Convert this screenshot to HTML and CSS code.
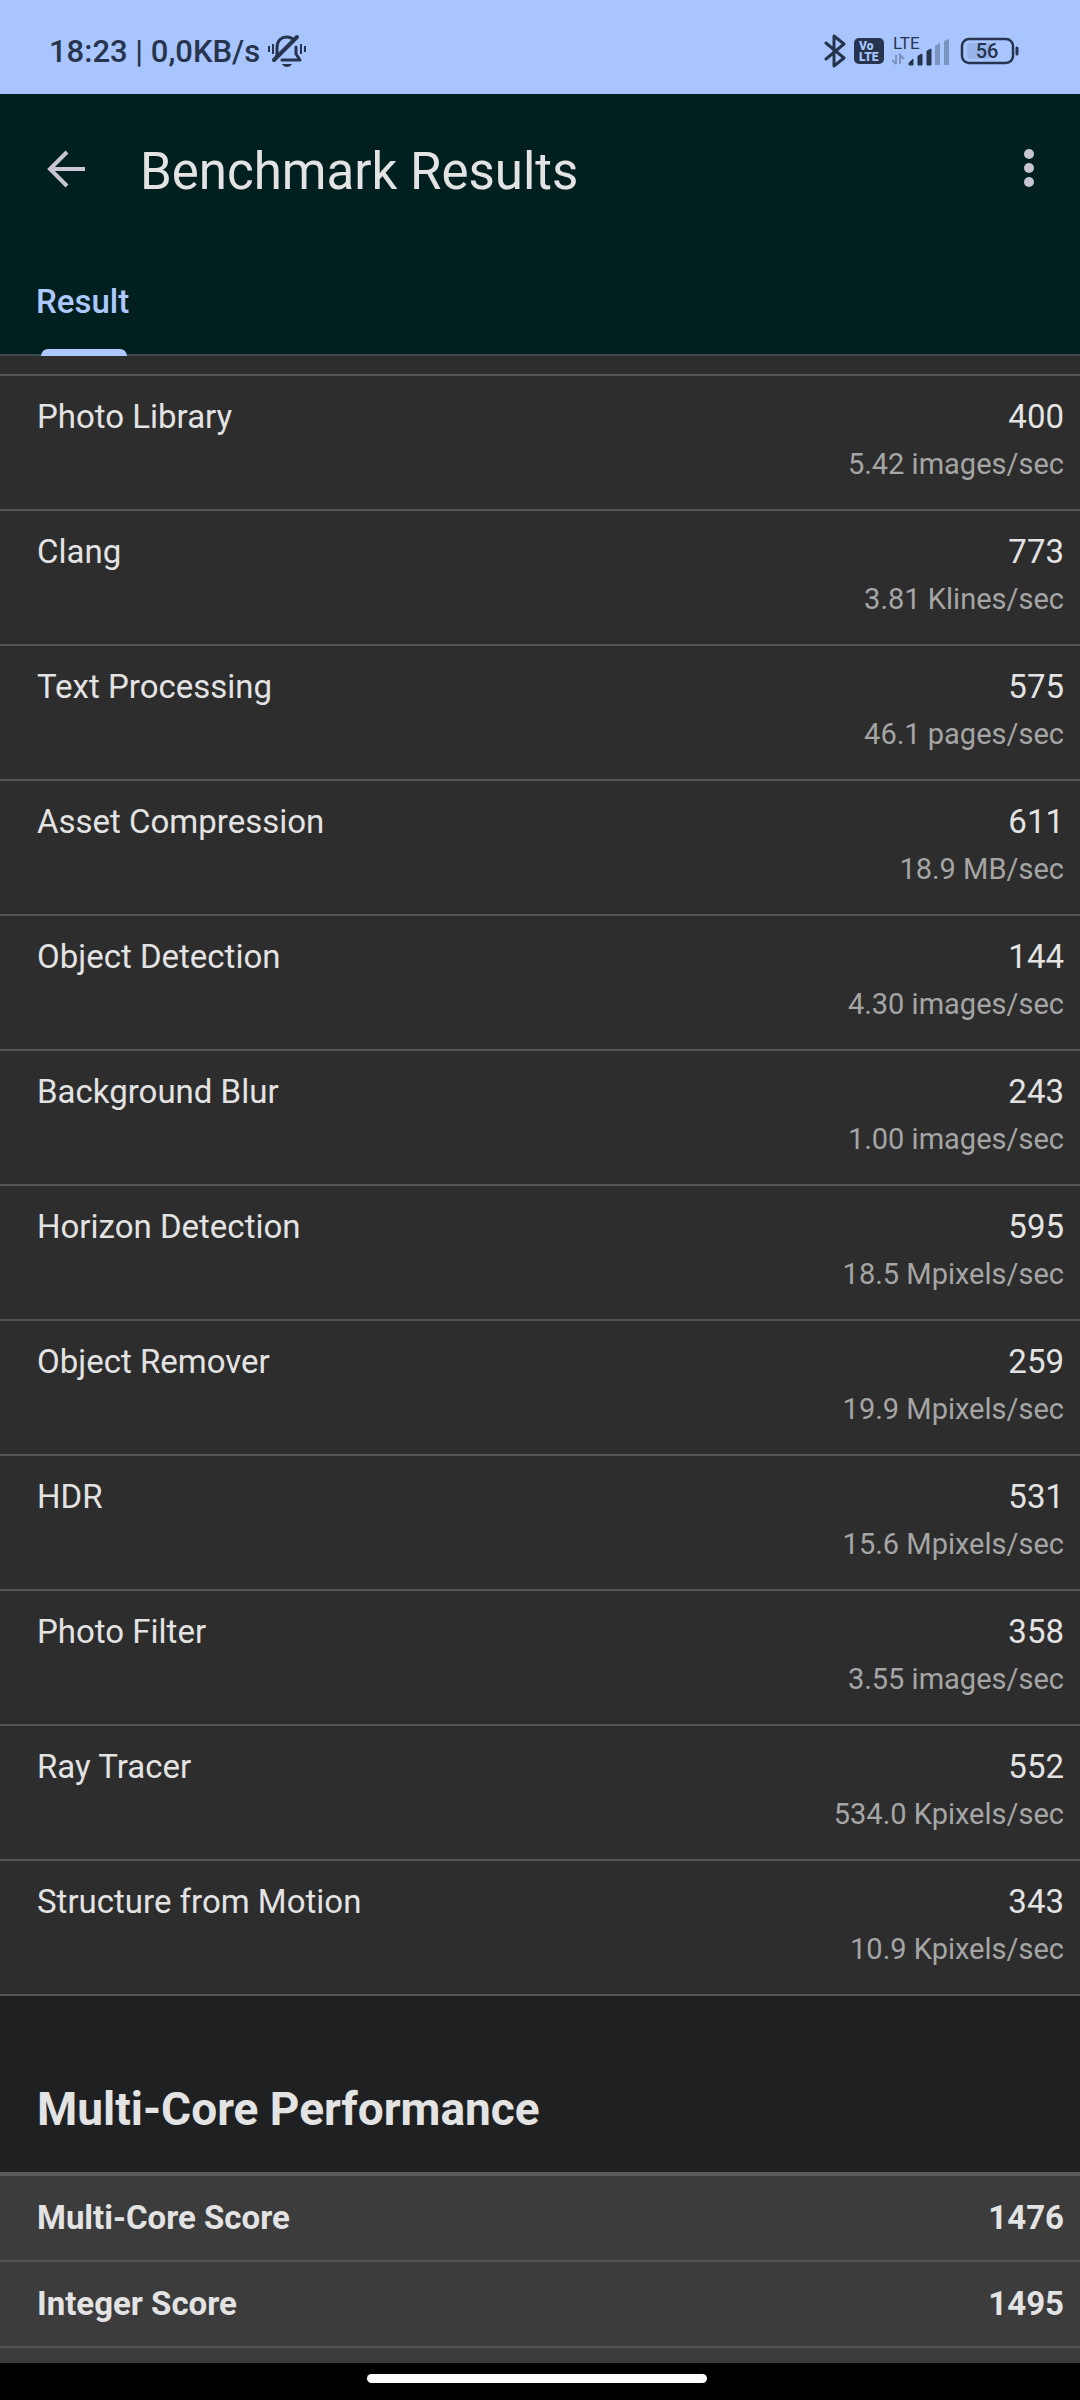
FILE: index.html
```html
<!DOCTYPE html>
<html lang="en">
<head>
    <meta charset="UTF-8">
    <meta name="viewport" content="width=device-width, initial-scale=1.0">
    <title>Benchmark Results</title>
    <link rel="stylesheet" href="styles.css">
</head>
<body>
    <div class="status-bar">
        <div class="status-left">
            <span>18:23 | 0,0KB/s</span>
            <svg width="38" height="34" viewBox="0 0 38 34" fill="none" stroke="currentColor">
                <path d="M9 22 V14 C9 7 13 3 19 3 C22 3 24 4 26 6" stroke-width="3"/>
                <path d="M28 13 V20 L32 26 H14" stroke-width="3" stroke-linejoin="round" stroke-linecap="round"/>
                <path d="M6 26 L29 3" stroke-width="4" stroke-linecap="round"/>
                <path d="M14 30 H24 C22 34 16 34 14 30 Z" fill="currentColor" stroke="none"/>
                <path d="M1 12 V18 M5 10 V20 M33 10 V20 M37 12 V18" stroke-width="2"/>
            </svg>
        </div>
        <div class="status-right">
            <svg width="22" height="34" viewBox="0 0 22 34" fill="none" stroke="currentColor" stroke-width="3" stroke-linejoin="round" stroke-linecap="round">
                <path d="M2 9 L20 24 L10 32 V2 L20 10 L2 25"/>
            </svg>
            <svg class="volte" width="30" height="26" viewBox="0 0 30 26">
                <rect width="30" height="26" rx="5" fill="currentColor"/>
                <text x="5" y="12">Vo</text>
                <text x="5" y="23">LTE</text>
            </svg>
            <svg class="signal" width="58" height="34" viewBox="0 0 58 34">
                <text x="1" y="15">LTE</text>
                <path d="M4 21 V30 M0 26 L4 30 M8 30 V21 L12 25" fill="none" stroke="#7c92bf" stroke-width="2"/>
                <path d="M17 31 V29 L21 25 V31 Z M26 31 V22 L30 20 V31 Z M35 31 V17 L39 15 V31 Z" fill="currentColor" stroke="currentColor" stroke-linejoin="round"/>
                <path d="M43 31 V12 L48 9 V31 Z M52 31 V7 L57 5 V31 Z" fill="#7c92bf"/>
            </svg>
            <svg class="battery" width="60" height="28" viewBox="0 0 60 28">
                <rect x="2" y="2" width="51" height="24" rx="7" fill="none" stroke="currentColor" stroke-width="2.5"/>
                <rect x="7" y="6" width="24" height="16" rx="3" fill="#98b3ea"/>
                <path d="M57 11 V17" stroke="currentColor" stroke-width="3" stroke-linecap="round"/>
                <text x="27" y="21" text-anchor="middle">56</text>
            </svg>
        </div>
    </div>

    <header class="app-bar">
        <div class="toolbar">
            <button class="icon-button" aria-label="Back">
                <svg width="40" height="40" viewBox="0 0 40 40" fill="none" stroke="currentColor" stroke-width="4">
                    <path d="M40 20 H5 M22 3 L5 20 L22 37"/>
                </svg>
            </button>
            <h1>Benchmark Results</h1>
            <button class="icon-button" aria-label="More options">
                <svg width="12" height="40" viewBox="0 0 12 40" fill="currentColor">
                    <circle cx="6" cy="5" r="5"/>
                    <circle cx="6" cy="19" r="5"/>
                    <circle cx="6" cy="33" r="5"/>
                </svg>
            </button>
        </div>
        <nav class="tabs">
            <a href="#result" class="tab">Result</a>
        </nav>
    </header>

    <main class="content" id="result">
        <div class="panel">
            <table class="results">
                <tr><th>Photo Library</th><td>400<small>5.42 images/sec</small></td></tr>
                <tr><th>Clang</th><td>773<small>3.81 Klines/sec</small></td></tr>
                <tr><th>Text Processing</th><td>575<small>46.1 pages/sec</small></td></tr>
                <tr><th>Asset Compression</th><td>611<small>18.9 MB/sec</small></td></tr>
                <tr><th>Object Detection</th><td>144<small>4.30 images/sec</small></td></tr>
                <tr><th>Background Blur</th><td>243<small>1.00 images/sec</small></td></tr>
                <tr><th>Horizon Detection</th><td>595<small>18.5 Mpixels/sec</small></td></tr>
                <tr><th>Object Remover</th><td>259<small>19.9 Mpixels/sec</small></td></tr>
                <tr><th>HDR</th><td>531<small>15.6 Mpixels/sec</small></td></tr>
                <tr><th>Photo Filter</th><td>358<small>3.55 images/sec</small></td></tr>
                <tr><th>Ray Tracer</th><td>552<small>534.0 Kpixels/sec</small></td></tr>
                <tr><th>Structure from Motion</th><td>343<small>10.9 Kpixels/sec</small></td></tr>
            </table>
        </div>

        <h2>Multi-Core Performance</h2>
        <table class="scores">
            <tr><th>Multi-Core Score</th><td>1476</td></tr>
            <tr><th>Integer Score</th><td>1495</td></tr>
        </table>
    </main>

    <div class="nav-bar">
        <div class="nav-handle"></div>
    </div>
</body>
</html>
```
FILE: styles.css
```css
* {
    box-sizing: border-box;
}
body {
    margin: 0;
    height: 100vh;
    display: flex;
    flex-direction: column;
    font-family: Roboto, sans-serif;
    font-size: 33px;
    line-height: 39px;
    color: #e3e3e3;
    background-color: #000;
}
svg {
    display: block;
    flex: none;
}

/* Status bar */
.status-bar {
    flex: none;
    display: flex;
    justify-content: space-between;
    height: 94px;
    padding: 8px 60px 0 49px;
    background-color: #a9c5ff;
    color: #26344d;
    font-size: 31px;
    font-weight: 500;
}
.status-left, .status-right {
    display: flex;
    align-items: center;
    gap: 8px;
}
.volte text {
    font-size: 12px;
    font-weight: 900;
    fill: #a9c5ff;
}
.signal text {
    font-size: 17px;
    font-weight: 400;
    fill: currentColor;
}
.battery {
    margin-left: 2px;
}
.battery text {
    font-size: 20px;
    fill: currentColor;
}

/* App bar */
.app-bar {
    flex: none;
    background-color: #002020;
    border-bottom: 2px solid #3b4a4a;
}
.toolbar {
    display: flex;
    align-items: center;
    height: 150px;
    padding: 0 45px;
}
.toolbar h1 {
    flex: 1;
    margin: 0 0 0 55px;
    padding-top: 6px;
    font-size: 51px;
    line-height: 60px;
    font-weight: 400;
}
.icon-button {
    padding: 0;
    border: none;
    background: none;
    color: #c7c6d2;
    cursor: pointer;
}
.tabs {
    display: flex;
    height: 110px;
    padding-left: 36px;
}
.tab {
    position: relative;
    padding-top: 38px;
    color: #adc7ff;
    font-weight: 500;
    text-decoration: none;
}
.tab::after {
    content: "";
    position: absolute;
    left: 5px;
    right: 2px;
    bottom: -2px;
    height: 7px;
    border-radius: 7px 7px 0 0;
    background-color: #adc7ff;
}

/* Result tables */
.content {
    flex: 1;
    min-height: 0;
    overflow: hidden;
    background-color: #3c3c3c;
}
.panel {
    padding-top: 18px;
    background-color: #2d2d2d;
}
table {
    width: 100%;
    border-spacing: 0;
}
th, td {
    border-bottom: 2px solid #545454;
    vertical-align: top;
}
th {
    padding-left: 37px;
    text-align: left;
    font-weight: 400;
}
td {
    padding-right: 16px;
    text-align: right;
}
.results {
    border-top: 2px solid #545454;
}
.results th, .results td {
    height: 135px;
    padding-top: 21px;
}
.results small {
    display: block;
    margin-top: 11px;
    font-size: 29px;
    line-height: 35px;
    color: #a5a5a5;
}
h2 {
    margin: 0;
    padding: 87px 37px 37px;
    font-size: 46px;
    line-height: 52px;
    font-weight: 700;
    background-color: #1f2022;
}
.scores {
    border-top: 4px solid #5a5a5a;
}
.scores th, .scores td {
    height: 86px;
    padding-top: 22px;
    font-weight: 700;
}

/* Gesture navigation */
.nav-bar {
    flex: none;
    height: 37px;
    padding: 11px 7px 0 0;
    background-color: #000;
}
.nav-handle {
    width: 340px;
    height: 9px;
    margin: 0 auto;
    border-radius: 5px;
    background-color: #fff;
}
```
